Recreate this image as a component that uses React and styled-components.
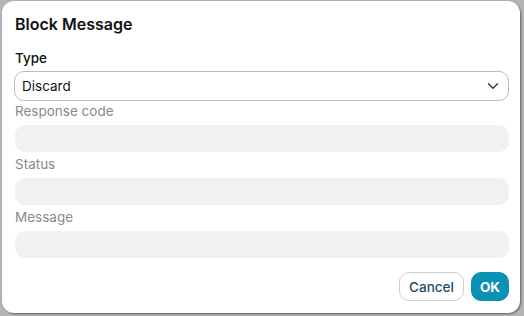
import React, { useState } from 'react';
import styled, { createGlobalStyle } from 'styled-components';

const Global = createGlobalStyle`
  html, body {
    margin: 0;
    padding: 0;
    background: #b4b4b4;
    font-family: Inter, "Noto Sans", sans-serif;
  }
`;

const Backdrop = styled.div`
  width: 524px;
  height: 316px;
  padding: 1px 0 0 2px;
  box-sizing: border-box;
`;

const Dialog = styled.div`
  width: 518px;
  height: 312px;
  box-sizing: border-box;
  background: #fff;
  border-radius: 12px;
  box-shadow: 1px 1px 2px rgba(0, 0, 0, 0.45);
  padding: 12px 11px 0 12px;
  display: flex;
  flex-direction: column;
`;

const Title = styled.h2`
  margin: 0 0 0 1px;
  font-size: 16px;
  line-height: 22px;
  font-weight: 600;
  color: #111;
`;

const Field = styled.div`
  display: flex;
  flex-direction: column;
  margin-top: ${p => p.top}px;
`;

const Label = styled.label`
  font-size: 13.5px;
  line-height: 20px;
  margin: 0 0 ${p => p.gap}px 1px;
  font-weight: ${p => (p.active ? 500 : 400)};
  color: ${p => (p.active ? '#111' : '#8a8a8a')};
`;

const SelectBox = styled.div`
  height: 30px;
  box-sizing: border-box;
  border: 1px solid #bdbdbd;
  border-radius: 10px;
  display: flex;
  align-items: center;
  justify-content: space-between;
  padding: 0 9px 0 7px;
  font-size: 13.5px;
  color: #111;
`;

const Input = styled.div`
  height: 27px;
  border-radius: 10px;
  background: #f1f1f1;
  margin-left: 1px;
`;

const Footer = styled.div`
  display: flex;
  justify-content: flex-end;
  gap: 7px;
  margin-top: 14px;
`;

const Button = styled.button`
  height: 29px;
  border-radius: 10px;
  font-family: Inter, "Noto Sans", sans-serif;
  font-size: 13.5px;
  padding: 0 ${p => (p.primary ? 8 : 9)}px;
  font-weight: ${p => (p.primary ? 700 : 500)};
  color: ${p => (p.primary ? '#fff' : '#1d4e6b')};
  background: ${p => (p.primary ? '#0b90b6' : '#fff')};
  border: 1px solid ${p => (p.primary ? '#0b90b6' : '#cfcfcf')};
  cursor: pointer;
`;

const Chevron = () => (
  <svg width="12" height="8" viewBox="0 0 12 8" fill="none">
    <path d="M1.5 1.8 6 6.2l4.5-4.4" stroke="#333" strokeWidth="1.4" strokeLinecap="round" strokeLinejoin="round" />
  </svg>
);

export default function App() {
  const [type] = useState('Discard');
  const fields = ['Response code', 'Status', 'Message'];

  return (
    <Backdrop>
      <Global />
      <Dialog>
        <Title>Block Message</Title>
        <Field top={13}>
          <Label active gap={3}>Type</Label>
          <SelectBox>
            <span>{type}</span>
            <Chevron />
          </SelectBox>
        </Field>
        {fields.map((f, i) => (
          <Field key={f} top={i === 0 ? 0 : 2}>
            <Label gap={4}>{f}</Label>
            <Input />
          </Field>
        ))}
        <Footer>
          <Button>Cancel</Button>
          <Button primary>OK</Button>
        </Footer>
      </Dialog>
    </Backdrop>
  );
}
